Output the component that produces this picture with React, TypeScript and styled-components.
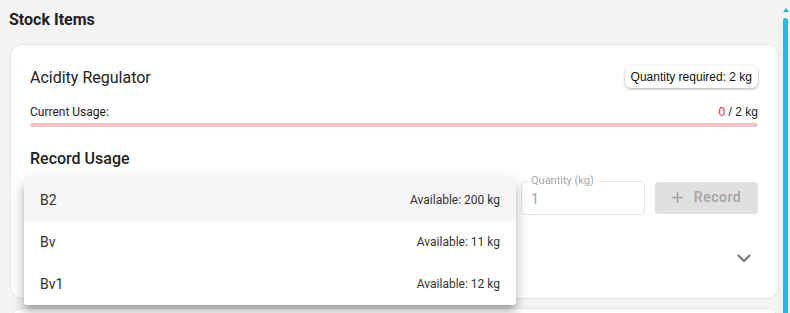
import React from "react";
import styled, { createGlobalStyle } from "styled-components";

const Global = createGlobalStyle`
  html, body { margin: 0; padding: 0; background: #f4f4f4; }
  body { font-family: Roboto, "Noto Sans", Arial, sans-serif; color: #222; overflow: hidden; }
  * { box-sizing: border-box; }
`;

const Page = styled.div`
  display: flex;
  height: 313px;
  overflow: hidden;
`;

const Main = styled.main`
  flex: 1;
  min-width: 0;
  padding: 10px 1px 0 10px;
`;

const Heading = styled.h2`
  margin: 0 0 15px -1px;
  font-size: 16px;
  line-height: 19px;
  font-weight: 700;
  color: #222;
`;

const Card = styled.section<{ $minHeight?: number }>`
  background: #fff;
  border: 1px solid #e4e4e4;
  border-radius: 12px;
  padding: 19px 20px 20px 19px;
  min-height: ${(p) => (p.$minHeight ? `${p.$minHeight}px` : "auto")};
  & + & { margin-top: 9px; }
`;

const HeaderRow = styled.div`
  display: flex;
  align-items: center;
  justify-content: space-between;
  height: 26px;
`;

const ItemName = styled.div`
  font-size: 16px;
  color: #222;
`;

const Chip = styled.div`
  height: 22px;
  display: flex;
  align-items: center;
  padding: 0 6px;
  border-radius: 6px;
  background: #fff;
  box-shadow: 0 1px 3px rgba(0, 0, 0, 0.35);
  font-family: "Liberation Sans", Arial, sans-serif;
  font-size: 12px;
  color: #111;
`;

const UsageRow = styled.div`
  display: flex;
  justify-content: space-between;
  margin-top: 15px;
  font-size: 12px;
  line-height: 14px;
  color: #222;
`;

const Amount = styled.span`
  font-family: "Liberation Sans", Arial, sans-serif;
`;

const Used = styled.span`
  color: #e0283c;
`;

const Bar = styled.div`
  margin-top: 4px;
  height: 4px;
  border-radius: 2px;
  background: #f0c5c6;
  overflow: hidden;
`;

const BarFill = styled.div`
  height: 100%;
  background: #e0283c;
`;

const SectionTitle = styled.h3`
  margin: 22px 0 0;
  font-size: 16px;
  line-height: 19px;
  font-weight: 500;
  color: #222;
`;

const FormRow = styled.div`
  display: flex;
  align-items: center;
  gap: 10px;
  margin-top: 13px;
`;

const SelectWrap = styled.div`
  position: relative;
  flex: 1;
  height: 34px;
  border: 1px solid #e0e0e0;
  border-radius: 4px;
`;

const Field = styled.div`
  position: relative;
  width: 124px;
  height: 34px;
  border: 1px solid #e6e6e6;
  border-radius: 4px;
  display: flex;
  align-items: center;
  padding: 2px 9px 0;
`;

const FieldLabel = styled.span`
  position: absolute;
  left: 5px;
  top: -8px;
  padding: 0 4px;
  background: #fff;
  font-size: 11px;
  line-height: 13px;
  color: #a9a9a9;
`;

const FieldValue = styled.span`
  font-size: 14px;
  color: #a3a3a3;
`;

const RecordButton = styled.button`
  width: 103px;
  height: 32px;
  border: none;
  border-radius: 4px;
  background: #e0e0e0;
  color: #a4a4a4;
  display: flex;
  align-items: center;
  justify-content: center;
  gap: 11px;
  font-family: Roboto, sans-serif;
  font-size: 14px;
  font-weight: 500;
  letter-spacing: 0.5px;
  padding: 0 0 2px;
`;

const Menu = styled.ul`
  position: absolute;
  left: -7px;
  top: -3px;
  width: 492px;
  margin: 0;
  padding: 0;
  list-style: none;
  background: #fff;
  border-radius: 4px;
  z-index: 10;
  box-shadow: 0px 5px 5px -3px rgba(0, 0, 0, 0.2),
    0px 8px 10px 1px rgba(0, 0, 0, 0.14),
    0px 3px 14px 2px rgba(0, 0, 0, 0.12);
  overflow: hidden;
`;

const MenuItem = styled.li<{ $active?: boolean }>`
  height: 42px;
  display: flex;
  align-items: center;
  justify-content: space-between;
  padding: 0 16px;
  background: ${(p) => (p.$active ? "#f5f5f5" : "#fff")};
`;

const ItemLabel = styled.span`
  font-size: 14px;
  color: #333;
`;

const ItemMeta = styled.span`
  font-size: 12px;
  color: #333;
`;

const AccordionRow = styled.div`
  margin-top: 23px;
  height: 40px;
  display: flex;
  align-items: center;
  justify-content: flex-end;
  padding-right: 2px;
  color: #707070;
`;

const ScrollRail = styled.div`
  width: 10px;
  display: flex;
  flex-direction: column;
  align-items: center;
  padding-top: 8px;
`;

const ScrollArrow = styled.div`
  width: 0;
  height: 0;
  border-left: 3px solid transparent;
  border-right: 3px solid transparent;
  border-bottom: 4px solid #2bb5e4;
  margin-left: 1px;
`;

const ScrollThumb = styled.div`
  margin-top: 6px;
  width: 5px;
  flex: 1;
  background: #2bb5e4;
  border-radius: 3px 3px 0 0;
`;

const PlusIcon = () => (
  <svg width="11" height="11" viewBox="0 0 11 11" fill="none" stroke="currentColor" strokeWidth="1.6">
    <path d="M5.5 0v11M0 5.5h11" />
  </svg>
);

const ChevronIcon = () => (
  <svg width="24" height="24" viewBox="0 0 24 24" fill="none" stroke="currentColor" strokeWidth="2" strokeLinecap="round" strokeLinejoin="round">
    <path d="m6.5 9.5 5.5 5.5 5.5-5.5" />
  </svg>
);

const batches = [
  { name: "B2", available: "200 kg" },
  { name: "Bv", available: "11 kg" },
  { name: "Bv1", available: "12 kg" },
];

export default function App() {
  const used = 0;
  const required = 2;
  return (
    <>
      <Global />
      <Page>
        <Main>
          <Heading>Stock Items</Heading>
          <Card>
            <HeaderRow>
              <ItemName>Acidity Regulator</ItemName>
              <Chip>Quantity required: 2 kg</Chip>
            </HeaderRow>
            <UsageRow>
              <span>Current Usage:</span>
              <Amount>
                <Used>{used}</Used> / {required} kg
              </Amount>
            </UsageRow>
            <Bar>
              <BarFill style={{ width: `${(used / required) * 100}%` }} />
            </Bar>
            <SectionTitle>Record Usage</SectionTitle>
            <FormRow>
              <SelectWrap>
                <Menu>
                  {batches.map((b, i) => (
                    <MenuItem key={b.name} $active={i === 0}>
                      <ItemLabel>{b.name}</ItemLabel>
                      <ItemMeta>Available: {b.available}</ItemMeta>
                    </MenuItem>
                  ))}
                </Menu>
              </SelectWrap>
              <Field>
                <FieldLabel>Quantity (kg)</FieldLabel>
                <FieldValue>1</FieldValue>
              </Field>
              <RecordButton disabled>
                <PlusIcon />
                Record
              </RecordButton>
            </FormRow>
            <AccordionRow>
              <ChevronIcon />
            </AccordionRow>
          </Card>
          <Card $minHeight={80} />
        </Main>
        <ScrollRail>
          <ScrollArrow />
          <ScrollThumb />
        </ScrollRail>
      </Page>
    </>
  );
}
